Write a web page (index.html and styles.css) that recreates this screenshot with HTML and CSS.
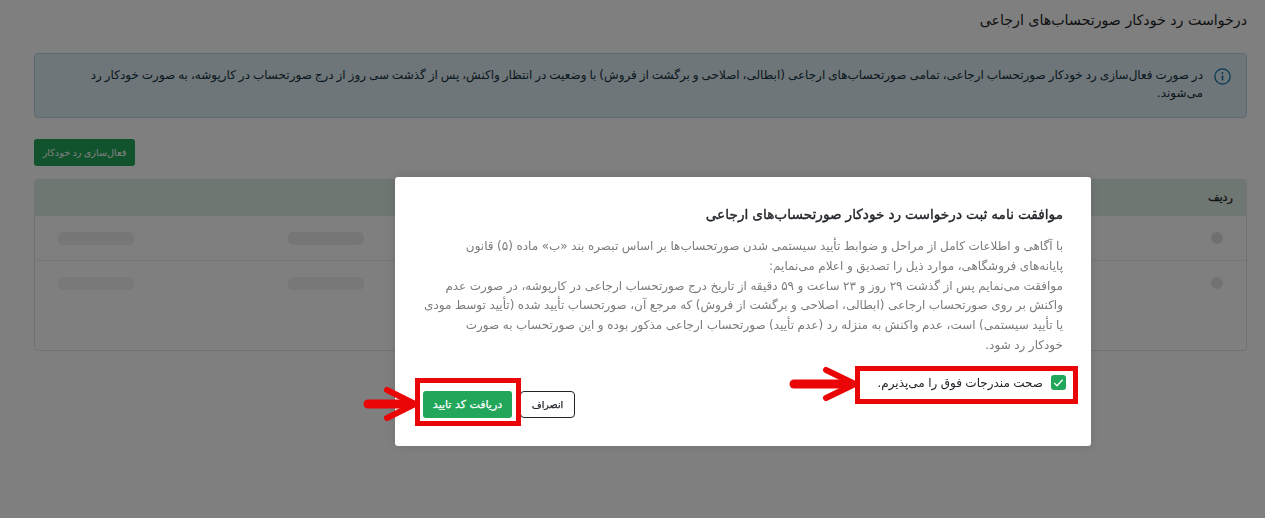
FILE: index.html
```html
<!DOCTYPE html>
<html lang="fa" dir="rtl">
<head>
    <meta charset="UTF-8">
    <meta name="viewport" content="width=device-width, initial-scale=1.0">
    <title>درخواست رد خودکار صورتحساب‌های ارجاعی</title>
    <link rel="stylesheet" href="styles.css">
</head>
<body>

    <div class="page">
        <h1>درخواست رد خودکار صورتحساب‌های ارجاعی</h1>

        <!-- Info alert -->
        <div class="alert">
            <svg class="alert-icon" viewBox="0 0 16 16" fill="none" stroke="currentColor">
                <circle cx="8" cy="8" r="7.2" stroke-width="1.2"/>
                <path d="M8 7v4.6" stroke-width="1.5"/>
                <circle cx="8" cy="4.7" r="0.9" fill="currentColor" stroke="none"/>
            </svg>
            <p>در صورت فعال‌سازی رد خودکار صورتحساب ارجاعی، تمامی صورتحساب‌های ارجاعی (ابطالی، اصلاحی و برگشت از فروش) با وضعیت در انتظار واکنش، پس از گذشت سی روز از درج صورتحساب در کارپوشه، به صورت خودکار رد می‌شوند.</p>
        </div>

        <div class="actions">
            <button class="btn-activate">فعال‌سازی رد خودکار</button>
        </div>

        <!-- Table with loading rows -->
        <div class="table">
            <div class="table-head">ردیف</div>
            <div class="table-row">
                <span class="dot"></span>
                <span class="bar bar-second"></span>
                <span class="bar bar-last"></span>
            </div>
            <div class="table-row faded">
                <span class="dot"></span>
                <span class="bar bar-second"></span>
                <span class="bar bar-last"></span>
            </div>
        </div>
    </div>

    <div class="backdrop"></div>

    <!-- Consent modal -->
    <div class="modal">
        <h2>موافقت نامه ثبت درخواست رد خودکار صورتحساب‌های ارجاعی</h2>
        <p class="modal-text">با آگاهی و اطلاعات کامل از مراحل و ضوابط تأیید سیستمی شدن صورتحساب‌ها بر اساس تبصره بند «ب» ماده (۵) قانون پایانه‌های فروشگاهی، موارد ذیل را تصدیق و اعلام می‌نمایم:<br>موافقت می‌نمایم پس از گذشت ۲۹ روز و ۲۳ ساعت و ۵۹ دقیقه از تاریخ درج صورتحساب ارجاعی در کارپوشه، در صورت عدم واکنش بر روی صورتحساب ارجاعی (ابطالی، اصلاحی و برگشت از فروش) که مرجع آن، صورتحساب تأیید شده (تأیید توسط مودی یا تأیید سیستمی) است، عدم واکنش به منزله رد (عدم تأیید) صورتحساب ارجاعی مذکور بوده و این صورتحساب به صورت<br>خودکار رد شود.</p>

        <div class="modal-footer">
            <label class="accept">
                <span class="checkbox">
                    <svg viewBox="0 0 16 16" fill="none" stroke="#fff" stroke-width="1.4">
                        <path d="M3.4 8.4l3 3 6-6.4"/>
                    </svg>
                </span>
                صحت مندرجات فوق را می‌پذیرم.
                <span class="frame frame-accept"></span>
                <svg class="arrow arrow-accept" viewBox="0 0 70 36" fill="none" stroke="#ea0606" stroke-linecap="round" stroke-linejoin="round">
                    <path d="M5 18H56" stroke-width="9"/>
                    <path d="M37 4l29 14-29 14" stroke-width="6"/>
                </svg>
            </label>

            <div class="modal-buttons">
                <button class="btn-cancel">انصراف</button>
                <button class="btn-confirm">
                    دریافت کد تایید
                    <span class="frame frame-confirm"></span>
                    <svg class="arrow arrow-confirm" viewBox="0 0 56 36" fill="none" stroke="#ea0606" stroke-linecap="round" stroke-linejoin="round">
                        <path d="M5 18H42" stroke-width="9"/>
                        <path d="M24 4l28 14-28 14" stroke-width="6"/>
                    </svg>
                </button>
            </div>
        </div>
    </div>

</body>
</html>
```

FILE: styles.css
```css
* {
    box-sizing: border-box;
    margin: 0;
    padding: 0;
}

body {
    font-family: "DejaVu Sans", "Noto Sans", sans-serif;
    background-color: #fff;
    color: #212529;
    height: 518px;
    overflow: hidden;
}

.page {
    padding: 10px 18px 0 34px;
}

h1 {
    font-size: 14.2px;
    font-weight: 400;
    line-height: 20px;
    color: #212529;
}

.alert {
    display: flex;
    align-items: flex-start;
    gap: 11px;
    height: 65px;
    margin-top: 23px;
    padding: 12px 15px 0 20px;
    background-color: #dcedf3;
    border: 1px solid #b4d4e2;
    border-radius: 4px;
    color: #15303d;
}

.alert p {
    font-size: 12px;
    line-height: 18px;
    word-spacing: -0.9px;
}

.alert-icon {
    flex-shrink: 0;
    width: 17px;
    height: 17px;
    margin-top: 2px;
    color: #0f6fa8;
}

.actions {
    margin-top: 21px;
    display: flex;
    justify-content: flex-end;
}

button {
    font-family: inherit;
    cursor: pointer;
}

.btn-activate {
    width: 101px;
    height: 27px;
    background-color: #21a65a;
    border: none;
    border-radius: 3px;
    color: #fff;
    font-size: 9.7px;
    font-weight: 400;
    word-spacing: -0.8px;
}

.table {
    height: 172px;
    margin-top: 13px;
    border: 1px solid #dee2e6;
    border-radius: 4px;
    overflow: hidden;
}

.table-head {
    height: 36px;
    padding: 0 13px;
    background-color: #dfefe5;
    font-size: 11.2px;
    -webkit-text-stroke: 0.3px #212529;
    line-height: 35px;
}

.table-row {
    display: flex;
    align-items: center;
    height: 44.5px;
    padding: 1px 23px 0 23px;
    border-bottom: 1px solid #e9ecef;
}

.table-row.faded {
    border-bottom: none;
    opacity: 0.8;
}

.dot {
    width: 12px;
    height: 12px;
    border-radius: 50%;
    background-color: #e0e0e0;
}

.bar {
    width: 76px;
    height: 13px;
    border-radius: 5px;
    background-color: #ececec;
}

.bar-second {
    margin-right: auto;
    margin-left: 154px;
}

.bar-last {
    background-color: #efefef;
}

.backdrop {
    position: fixed;
    inset: 0;
    background-color: rgba(0, 0, 0, 0.5);
}

.modal {
    position: fixed;
    top: 177px;
    left: 395px;
    width: 696px;
    height: 269px;
    padding: 28px;
    background-color: #fff;
    border-radius: 3px;
    box-shadow: 0 0 12px rgba(0, 0, 0, 0.12);
}

.modal h2 {
    font-size: 13.7px;
    font-weight: 400;
    -webkit-text-stroke: 0.35px #212529;
    line-height: 18px;
    word-spacing: -0.4px;
    color: #212529;
}

.modal-text {
    margin-top: 14px;
    font-size: 12px;
    line-height: 19.8px;
    word-spacing: -0.3px;
    color: #7b7b7b;
}

.modal-footer {
    display: flex;
    justify-content: space-between;
    align-items: flex-start;
    margin-top: 19px;
}

.accept {
    position: relative;
    display: flex;
    align-items: center;
    gap: 8px;
    margin-right: -3px;
    font-size: 12px;
    line-height: 16px;
    word-spacing: -0.4px;
    color: #212529;
}

.checkbox {
    display: block;
    width: 15px;
    height: 15px;
    background-color: #21a65a;
    border-radius: 3px;
}

.checkbox svg {
    display: block;
    width: 15px;
    height: 15px;
}

.modal-buttons {
    display: flex;
    gap: 8px;
    margin-top: 16px;
}

.btn-cancel {
    width: 55px;
    height: 27px;
    background-color: #fff;
    border: 1px solid #212529;
    border-radius: 4px;
    color: #212529;
    font-size: 9.6px;
    -webkit-text-stroke: 0.25px #212529;
}

.btn-confirm {
    position: relative;
    width: 89px;
    height: 27px;
    background-color: #21a65a;
    border: none;
    border-radius: 3px;
    color: #fff;
    font-size: 11px;
    -webkit-text-stroke: 0.25px #fff;
}

/* red annotations drawn over the screenshot */
.frame {
    position: absolute;
    border: 5px solid #ea0606;
    pointer-events: none;
}

.frame-accept {
    top: -9px;
    bottom: -13px;
    right: -12px;
    left: -22px;
}

.frame-confirm {
    top: -13px;
    bottom: -8px;
    right: -9px;
    left: -8px;
}

.arrow {
    position: absolute;
}

.arrow-accept {
    top: -9px;
    left: -88px;
    width: 70px;
    height: 36px;
}

.arrow-confirm {
    top: -5px;
    left: -60px;
    width: 56px;
    height: 36px;
}
```
